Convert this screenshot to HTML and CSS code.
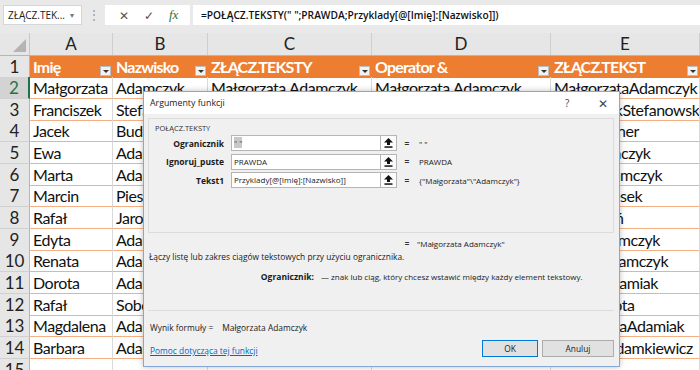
FILE: index.html
```html
<!DOCTYPE html>
<html lang="pl">
<head>
  <meta charset="UTF-8">
  <title>Argumenty funkcji</title>
  <link rel="stylesheet" href="styles.css">
</head>
<body>
  <div class="toolbar">
    <div class="name-box">ZŁĄCZ.TEK... <span class="name-drop">▾</span></div>
    <div class="grip">⋮</div>
    <div class="fx-box">
      <span class="fx-btn">✕</span>
      <span class="fx-btn">✓</span>
      <span class="fx-btn fx">fx</span>
    </div>
    <div class="formula">=POŁĄCZ.TEKSTY(" ";PRAWDA;Przyklady[@[Imię]:[Nazwisko]])</div>
  </div>

  <div class="sheet">
    <div class="row col-heads">
      <div class="corner"></div>
      <div class="ch">A</div><div class="ch">B</div><div class="ch">C</div><div class="ch">D</div><div class="ch">E</div>
    </div>
    <div class="row head">
      <div class="rh">1</div>
      <div class="c">Imię<span class="flt"></span></div>
      <div class="c">Nazwisko<span class="flt"></span></div>
      <div class="c">ZŁĄCZ.TEKSTY<span class="flt"></span></div>
      <div class="c">Operator &amp;<span class="flt"></span></div>
      <div class="c">ZŁĄCZ.TEKST<span class="flt"></span></div>
    </div>
    <div class="row active"><div class="rh">2</div><div class="c">Małgorzata</div><div class="c">Adamczyk</div><div class="c">Małgorzata Adamczyk</div><div class="c">Małgorzata Adamczyk</div><div class="c">MałgorzataAdamczyk</div></div>
    <div class="row"><div class="rh">3</div><div class="c">Franciszek</div><div class="c">Stefanowski</div><div class="c">Franciszek Stefanowski</div><div class="c">Franciszek Stefanowski</div><div class="c">FranciszekStefanowski</div></div>
    <div class="row"><div class="rh">4</div><div class="c">Jacek</div><div class="c">Budner</div><div class="c">Jacek Budner</div><div class="c">Jacek Budner</div><div class="c">JacekBudner</div></div>
    <div class="row"><div class="rh">5</div><div class="c">Ewa</div><div class="c">Adamczyk</div><div class="c">Ewa Adamczyk</div><div class="c">Ewa Adamczyk</div><div class="c">EwaAdamczyk</div></div>
    <div class="row"><div class="rh">6</div><div class="c">Marta</div><div class="c">Adamczyk</div><div class="c">Marta Adamczyk</div><div class="c">Marta Adamczyk</div><div class="c">MartaAdamczyk</div></div>
    <div class="row"><div class="rh">7</div><div class="c">Marcin</div><div class="c">Piesek</div><div class="c">Marcin Piesek</div><div class="c">Marcin Piesek</div><div class="c">MarcinPiesek</div></div>
    <div class="row"><div class="rh">8</div><div class="c">Rafał</div><div class="c">Jaroń</div><div class="c">Rafał Jaroń</div><div class="c">Rafał Jaroń</div><div class="c">RafałJaroń</div></div>
    <div class="row"><div class="rh">9</div><div class="c">Edyta</div><div class="c">Adamczyk</div><div class="c">Edyta Adamczyk</div><div class="c">Edyta Adamczyk</div><div class="c">EdytaAdamczyk</div></div>
    <div class="row"><div class="rh">10</div><div class="c">Renata</div><div class="c">Adamczyk</div><div class="c">Renata Adamczyk</div><div class="c">Renata Adamczyk</div><div class="c">RenataAdamczyk</div></div>
    <div class="row"><div class="rh">11</div><div class="c">Dorota</div><div class="c">Adamiak</div><div class="c">Dorota Adamiak</div><div class="c">Dorota Adamiak</div><div class="c">DorotaAdamiak</div></div>
    <div class="row"><div class="rh">12</div><div class="c">Rafał</div><div class="c">Sobota</div><div class="c">Rafał Sobota</div><div class="c">Rafał Sobota</div><div class="c">RafałSobota</div></div>
    <div class="row"><div class="rh">13</div><div class="c">Magdalena</div><div class="c">Adamiak</div><div class="c">Magdalena Adamiak</div><div class="c">Magdalena Adamiak</div><div class="c">MagdalenaAdamiak</div></div>
    <div class="row"><div class="rh">14</div><div class="c">Barbara</div><div class="c">Adamkiewicz</div><div class="c">Barbara Adamkiewicz</div><div class="c">Barbara Adamkiewicz</div><div class="c">BarbaraAdamkiewicz</div></div>
    <div class="row blank"><div class="rh">15</div><div class="c"></div><div class="c"></div><div class="c"></div><div class="c"></div><div class="c"></div></div>
  </div>

  <!-- Okno dialogowe nad arkuszem -->
  <div class="dialog">
    <div class="dlg-title">
      <span class="dlg-caption">Argumenty funkcji</span>
      <span class="dlg-help">?</span>
      <span class="dlg-close">✕</span>
    </div>
    <div class="dlg-body">
      <div class="group">
        <div class="fn-name">POŁĄCZ.TEKSTY</div>
        <div class="arg">
          <div class="arg-label">Ogranicznik</div>
          <div class="arg-input"><span class="sel">" "</span></div>
          <div class="arg-btn"><svg width="9" height="10" viewBox="0 0 9 10"><polygon points="4.5,0 9,4.5 6,4.5 6,7 3,7 3,4.5 0,4.5" fill="#111"/><rect x="0.5" y="8.3" width="8" height="1.5" fill="#111"/></svg></div>
          <div class="arg-eq">=</div>
          <div class="arg-val">" "</div>
        </div>
        <div class="arg">
          <div class="arg-label">Ignoruj_puste</div>
          <div class="arg-input">PRAWDA</div>
          <div class="arg-btn"><svg width="9" height="10" viewBox="0 0 9 10"><polygon points="4.5,0 9,4.5 6,4.5 6,7 3,7 3,4.5 0,4.5" fill="#111"/><rect x="0.5" y="8.3" width="8" height="1.5" fill="#111"/></svg></div>
          <div class="arg-eq">=</div>
          <div class="arg-val">PRAWDA</div>
        </div>
        <div class="arg">
          <div class="arg-label">Tekst1</div>
          <div class="arg-input">Przyklady[@[Imię]:[Nazwisko]]</div>
          <div class="arg-btn"><svg width="9" height="10" viewBox="0 0 9 10"><polygon points="4.5,0 9,4.5 6,4.5 6,7 3,7 3,4.5 0,4.5" fill="#111"/><rect x="0.5" y="8.3" width="8" height="1.5" fill="#111"/></svg></div>
          <div class="arg-eq">=</div>
          <div class="arg-val">{"Małgorzata"\"Adamczyk"}</div>
        </div>
      </div>
      <div class="result"><span class="arg-eq">=</span><span>"Małgorzata Adamczyk"</span></div>
      <div class="desc">Łączy listę lub zakres ciągów tekstowych przy użyciu ogranicznika.</div>
      <div class="arg-help"><b>Ogranicznik:</b><span>— znak lub ciąg, który chcesz wstawić między każdy element tekstowy.</span></div>
      <div class="sep"></div>
      <div class="formula-result">Wynik formuły =<span>Małgorzata Adamczyk</span></div>
      <div class="dlg-foot">
        <a class="help-link" href="#">Pomoc dotycząca tej funkcji</a>
        <div class="btn ok">OK</div>
        <div class="btn">Anuluj</div>
      </div>
    </div>
  </div>
</body>
</html>
```

FILE: styles.css
```css
body {
  margin: 0;
  background: #fff;
  font-family: 'Lato', 'Noto Sans', sans-serif;
  overflow: hidden;
  width: 700px;
  height: 370px;
  position: relative;
}

/* pasek formuły */
.toolbar {
  height: 33px;
  background: #e9e9e9;
  display: flex;
  align-items: flex-start;
  padding-top: 5px;
  box-sizing: border-box;
  font-family: 'Open Sans', 'Noto Sans', sans-serif;
}
.name-box {
  margin-left: 3px;
  width: 79px;
  height: 20px;
  background: #fff;
  border: 1px solid #d6d6d6;
  box-sizing: border-box;
  font-size: 10px;
  color: #222;
  line-height: 18px;
  padding-left: 4px;
  position: relative;
  white-space: nowrap;
}
.name-drop {
  position: absolute;
  right: 7px;
  top: 0;
  font-size: 8px;
  color: #777;
}
.grip {
  width: 23px;
  text-align: center;
  color: #9a9a9a;
  font-size: 12px;
  line-height: 20px;
}
.fx-box {
  width: 85px;
  height: 20px;
  background: #fff;
  display: flex;
  align-items: center;
  justify-content: space-around;
  padding: 0 4px 0 6px;
  box-sizing: border-box;
}
.fx-btn {
  color: #555;
  font-size: 12px;
}
.fx {
  font-family: 'Liberation Serif', serif;
  font-style: italic;
  color: #217346;
  font-size: 13px;
}
.formula {
  margin-left: 3px;
  flex: 1;
  height: 20px;
  background: #fff;
  font-size: 10.2px;
  font-weight: 600;
  color: #111;
  line-height: 20px;
  padding-left: 8px;
  white-space: nowrap;
}

/* arkusz */
.sheet {
  background: #fff;
}
.row {
  display: grid;
  grid-template-columns: 30px 83px 95px 164px 179px 1fr;
  height: 21.67px;
}
.col-heads {
  height: 22.5px;
  background: #e6e6e6;
  border-bottom: 1px solid #b6b6b6;
  box-sizing: border-box;
}
.corner {
  position: relative;
  border-right: 1px solid #c9c9c9;
}
.corner::after {
  content: '';
  position: absolute;
  right: 3px;
  bottom: 3px;
  border-left: 13px solid transparent;
  border-bottom: 13px solid #b4b4b4;
}
.ch {
  text-align: center;
  font-size: 17px;
  line-height: 22px;
  color: #222;
  border-right: 1px solid #cfcfcf;
}
.rh {
  background: #e6e6e6;
  text-align: center;
  font-size: 17px;
  line-height: 21px;
  color: #222;
  border-right: 1px solid #b6b6b6;
  border-bottom: 1px solid #d0d0d0;
}
.active .rh {
  background: #d3d3d3;
  color: #217346;
  border-right: 2px solid #217346;
}
.c {
  font-size: 16px;
  letter-spacing: -0.45px;
  line-height: 21px;
  padding-left: 3px;
  color: #111;
  white-space: nowrap;
  overflow: hidden;
  border-right: 1px solid #d9d9d9;
  border-bottom: 1px solid #f4b084;
  position: relative;
}
.blank .c {
  border-bottom: none;
}
.head .c {
  background: #ed7d31;
  color: #fff;
  font-weight: 700;
  letter-spacing: -0.8px;
  border-right: none;
  border-bottom: none;
}
.flt {
  position: absolute;
  right: 2px;
  bottom: 2px;
  width: 11px;
  height: 10px;
  background: #f2f2f2;
  border: 1px solid #bdbdbd;
  box-sizing: border-box;
}
.flt::after {
  content: '';
  position: absolute;
  left: 2px;
  top: 3px;
  border-left: 3px solid transparent;
  border-right: 3px solid transparent;
  border-top: 3px solid #333;
}

/* okno dialogowe */
.dialog {
  position: absolute;
  left: 143px;
  top: 91px;
  width: 477px;
  height: 276px;
  background: #f0f0f0;
  border: 1px solid #86a8d6;
  box-sizing: border-box;
  box-shadow: 0 0 6px rgba(0,0,0,0.25);
  font-family: 'Open Sans', 'Noto Sans', sans-serif;
  font-size: 8.4px;
  color: #1a1a1a;
  display: flex;
  flex-direction: column;
}
.dlg-title {
  height: 22px;
  background: #fff;
  display: flex;
  align-items: center;
  padding-left: 6px;
  font-size: 8.8px;
  color: #222;
}
.dlg-caption { flex: 1; }
.dlg-help {
  width: 33px;
  font-size: 10px;
  color: #444;
}
.dlg-close {
  width: 21px;
  font-size: 12px;
  color: #444;
}
.dlg-body {
  flex: 1;
  padding: 4px 5px 0 4px;
  display: flex;
  flex-direction: column;
}
.group {
  height: 115px;
  border: 1px solid #dcdcdc;
  box-sizing: border-box;
  padding: 3px 0 0 6px;
}
.fn-name {
  font-size: 7.5px;
  height: 13px;
  line-height: 13px;
  color: #333;
}
.arg {
  display: grid;
  grid-template-columns: 76px 149px 17px 20px 1fr;
  height: 16px;
  margin-bottom: 2.5px;
  align-items: center;
}
.arg-label {
  text-align: right;
  font-weight: 700;
  font-size: 8.5px;
  padding-right: 7px;
  white-space: nowrap;
}
.arg-input {
  height: 16px;
  background: #fff;
  border: 1px solid #b5b5b5;
  border-right: none;
  box-sizing: border-box;
  line-height: 14px;
  padding-left: 2px;
  white-space: nowrap;
  overflow: hidden;
  font-size: 8px;
}
.sel {
  background: #c8c8c8;
  color: #555;
}
.arg-btn {
  height: 16px;
  border: 1px solid #b5b5b5;
  background: #fbfbfb;
  box-sizing: border-box;
  display: flex;
  align-items: center;
  justify-content: center;
}
.arg-eq {
  text-align: center;
  font-weight: 700;
  color: #333;
}
.arg-val {
  white-space: nowrap;
  padding-left: 2px;
  font-size: 8px;
}
.result {
  margin-top: 5px;
  padding-left: 255px;
  display: flex;
  height: 12px;
  line-height: 12px;
  font-size: 8px;
}
.result .arg-eq {
  width: 8px;
  margin-right: 6px;
}
.desc {
  height: 14px;
  line-height: 14px;
  margin-left: 1px;
}
.arg-help {
  margin-top: 6px;
  display: flex;
  height: 14px;
  line-height: 14px;
  font-size: 8px;
}
.arg-help b {
  width: 173px;
  text-align: right;
  font-size: 8.5px;
  padding-right: 7px;
  box-sizing: border-box;
}
.sep {
  margin-top: 26px;
  border-top: 1px solid #dcdcdc;
}
.formula-result {
  margin-top: 10px;
  margin-left: 2px;
  height: 14px;
  line-height: 14px;
}
.formula-result span { margin-left: 9px; }
.dlg-foot {
  margin-top: 5px;
  display: flex;
  align-items: flex-start;
  padding-left: 2px;
}
.help-link {
  flex: 1;
  margin-top: 5px;
  color: #0066cc;
  text-decoration: underline;
}
.btn {
  width: 72px;
  height: 17px;
  border: 1px solid #adadad;
  background: #e1e1e1;
  box-sizing: border-box;
  text-align: center;
  line-height: 15px;
  margin-left: 4px;
}
.btn.ok {
  width: 56px;
  border-color: #0078d7;
}
```
